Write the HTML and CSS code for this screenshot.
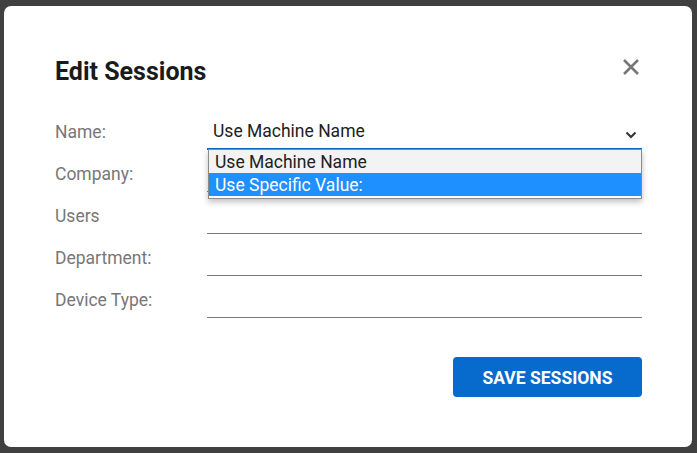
FILE: index.html
```html
<!DOCTYPE html>
<html lang="en">
<head>
    <meta charset="UTF-8">
    <meta name="viewport" content="width=device-width, initial-scale=1.0">
    <title>Edit Sessions</title>
    <link rel="stylesheet" href="styles.css">
</head>
<body>
    <div class="dialog">
        <button class="close" aria-label="Close">
            <svg width="18" height="18" viewBox="0 0 18 18"><path d="M2 2 L16 16 M16 2 L2 16" stroke="#777" stroke-width="2.6" fill="none"/></svg>
        </button>
        <h1>Edit Sessions</h1>
        <div class="form">
            <div class="row">
                <label>Name:</label>
                <div class="field select">
                    <span class="value">Use Machine Name</span>
                    <svg class="chevron" width="12" height="8" viewBox="0 0 12 8"><path d="M1.5 1.5 L6 6 L10.5 1.5" stroke="#333" stroke-width="2" fill="none"/></svg>
                    <ul class="options">
                        <li class="hover">Use Machine Name</li>
                        <li class="selected">Use Specific Value:</li>
                    </ul>
                </div>
            </div>
            <div class="row">
                <label>Company:</label>
                <div class="field"></div>
            </div>
            <div class="row">
                <label>Users</label>
                <div class="field"></div>
            </div>
            <div class="row">
                <label>Department:</label>
                <div class="field"></div>
            </div>
            <div class="row">
                <label>Device Type:</label>
                <div class="field"></div>
            </div>
        </div>
        <div class="actions">
            <button class="btn-save">SAVE SESSIONS</button>
        </div>
    </div>
</body>
</html>
```

FILE: styles.css
```css
/* Modal over dark backdrop */
body { margin: 0; height: 453px; background: #404040; font-family: Roboto, "Liberation Sans", sans-serif; }
.dialog { position: relative; margin: 6px 5px 0 4px; height: 441px; box-sizing: border-box; padding: 51px 50px 0 51px; background: #fff; border-radius: 7px; }
h1 { margin: 0; font-size: 25px; line-height: 30px; font-weight: 700; color: #1a1a1a; }
.close { position: absolute; top: 52px; right: 52px; padding: 0; border: 0; background: none; cursor: pointer; }
.form { margin-top: 21px; }
.row { display: grid; grid-template-columns: 152px 1fr; height: 42px; }
.row label { align-self: end; padding-bottom: 8px; font-size: 17.5px; line-height: 20px; color: #777; }
.field { position: relative; border-bottom: 1px solid #7a7a7a; }
.select { border-bottom: 2px solid #0a6bd0; display: flex; align-items: end; justify-content: space-between; padding: 0 5px 7px 6px; height: 42px; box-sizing: border-box; }
.select .value { font-size: 17.5px; line-height: 20px; color: #222; }
.chevron { margin-bottom: 2px; }
.options { position: absolute; top: 41px; left: 1px; right: 0; margin: 0; padding: 0 0 2px 0; list-style: none; background: #fff; border: 1px solid #8a8a8a; box-shadow: 0 3px 6px rgba(0, 0, 0, 0.25); z-index: 2; }
.options li { padding: 2px 6px 0; height: 23px; box-sizing: border-box; font-size: 17.5px; line-height: 21px; color: #222; }
.options li.hover { background: #f3f3f3; }
.options li.selected { background: #1e90ff; color: #fff; }
.actions { display: flex; justify-content: flex-end; margin-top: 39px; }
.btn-save { width: 189px; height: 40px; padding-top: 2px; border: 0; border-radius: 4px; background: #066bcd; color: #fff; font-family: Roboto, "Liberation Sans", sans-serif; font-size: 17.5px; font-weight: 700; cursor: pointer; }
```
